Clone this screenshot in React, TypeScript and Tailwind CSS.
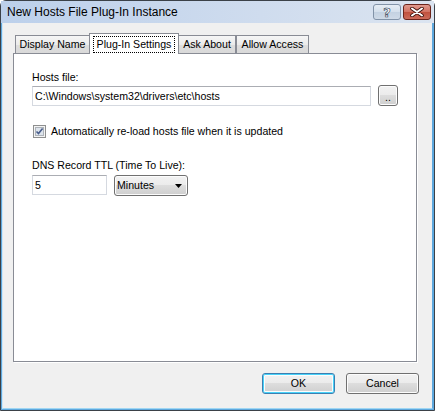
import React, { useState } from 'react';

const tabs = [
  { label: 'Display Name', w: 'w-[75px]' },
  { label: 'Plug-In Settings', w: 'w-[90px]' },
  { label: 'Ask About', w: 'w-[58px]' },
  { label: 'Allow Access', w: 'w-[73px]' },
];

const ui = "font-['Liberation_Sans',Arial,sans-serif] text-[10.6px] leading-[13px] text-black";

const CheckMark: React.FC = () => (
  <svg width="13" height="13" viewBox="0 0 13 13">
    <rect x="0.5" y="0.5" width="12" height="12" fill="#f4f4f4" stroke="#8e8f8f" />
    <rect x="2.5" y="2.5" width="8" height="8" fill="#dde4ec" stroke="#aeb3b9" />
    <path d="M3.5 6.5 L5.5 8.6 L9.6 3.6" fill="none" stroke="#4a5e8c" strokeWidth="1.6" />
  </svg>
);

const Dialog: React.FC = () => {
  const [active, setActive] = useState(1);
  const [hosts, setHosts] = useState('C:\\Windows\\system32\\drivers\\etc\\hosts');
  const [ttl, setTtl] = useState('5');
  const [reload, setReload] = useState(true);

  return (
    <div className="h-[411px] w-[435px] overflow-hidden bg-white">
      <div className="flex h-full w-full flex-col rounded-t-[6px] border border-[#3b4148] bg-[#c8d9ee]">
        {/* title bar */}
        <div className="flex h-[22px] shrink-0 justify-between bg-[linear-gradient(90deg,#bcd0eb,#cfdcee_60%,#dbe4f0)] pl-[6px] pr-[3px]">
          <span className="mt-[4px] font-['Liberation_Sans',Arial,sans-serif] text-[12px] leading-[15px] text-black">
            New Hosts File Plug-In Instance
          </span>
          <div className="mt-[3px] flex gap-[2px]">
            <div className="flex h-[16px] w-[28px] items-center justify-center rounded-[3px] border border-[#8293a8] bg-[linear-gradient(#e6edf5,#d4dfeb_50%,#c3d1e1_50%,#cfdae7)]">
              <span className="font-['DejaVu_Sans',sans-serif] text-[13px] font-bold leading-none text-white [-webkit-text-stroke:0.6px_#2b3c52]">
                ?
              </span>
            </div>
            <div className="flex h-[16px] w-[28px] items-center justify-center rounded-[3px] border border-[#6b241b] bg-[linear-gradient(#e09a8e,#d27161_50%,#c0503d_50%,#cc6b5a)]">
              <svg width="14" height="10" viewBox="0 0 14 10">
                <path d="M2 1.5 L12 8.5 M12 1.5 L2 8.5" stroke="#3b0e08" strokeWidth="3.6" strokeLinecap="round" />
                <path d="M2 1.5 L12 8.5 M12 1.5 L2 8.5" stroke="#ffffff" strokeWidth="2" strokeLinecap="round" />
              </svg>
            </div>
          </div>
        </div>

        {/* frame + client */}
        <div className="flex flex-1 flex-col border-x border-b border-[#5ea8de]">
          <div className={`flex flex-1 flex-col border-l border-r border-b border-l-[#cfe7f7] border-r-[#5ea8de] border-b-[#9fd6f3] bg-[#f0f0f0] pl-[10px] pt-[9px] ${ui}`}>
            {/* tabs */}
            <div className="flex h-[21px] items-end pl-[2px]">
              {tabs.map((t, i) =>
                i === active ? (
                  <div
                    key={t.label}
                    onClick={() => setActive(i)}
                    className={`relative z-10 -mx-[1px] -mb-px flex h-[21px] ${t.w} items-start justify-center border-x border-t border-[#898c95] bg-white pt-[2px]`}
                  >
                    <span className="border border-dotted border-black px-[3px] py-[1px]">{t.label}</span>
                  </div>
                ) : (
                  <div
                    key={t.label}
                    onClick={() => setActive(i)}
                    className={`flex h-[18px] ${t.w} items-center justify-center border-x border-t border-[#898c95] bg-[linear-gradient(#f6f6f6,#ebebeb_50%,#dedede_50%,#d9d9d9)]`}
                  >
                    {t.label}
                  </div>
                )
              )}
            </div>

            {/* panel */}
            <div className="flex h-[309px] w-[404px] flex-col border border-[#898c95] bg-white pl-[18px] pt-[17px] shadow-[1px_1px_0_#ffffff]">
              <span>Hosts file:</span>
              <div className="mt-[2px] flex items-start gap-[7px]">
                <input
                  value={hosts}
                  onChange={(e) => setHosts(e.target.value)}
                  className="h-[20px] w-[339px] border border-[#d5d9e0] border-t-[#abadb3] bg-white px-[2px] outline-none"
                />
                <button className="-mt-px flex h-[21px] w-[20px] items-end justify-center rounded-[3px] border border-[#707070] bg-[linear-gradient(#f2f2f2,#ebebeb_50%,#dddddd_50%,#cfcfcf)] pb-[4px] leading-[8px] shadow-[inset_0_0_0_1px_#fcfcfc]">
                  ..
                </button>
              </div>

              <label className="mt-[19px] flex items-center gap-[5px] pl-px" onClick={() => setReload(!reload)}>
                {reload ? (
                  <CheckMark />
                ) : (
                  <span className="h-[13px] w-[13px] border border-[#8e8f8f] bg-[#f4f4f4]" />
                )}
                <span>Automatically re-load hosts file when it is updated</span>
              </label>

              <span className="mt-[21px]">DNS Record TTL (Time To Live):</span>
              <div className="mt-[3px] flex items-start gap-[7px]">
                <input
                  value={ttl}
                  onChange={(e) => setTtl(e.target.value)}
                  className="h-[20px] w-[75px] border border-[#d5d9e0] border-t-[#abadb3] bg-white px-[2px] outline-none"
                />
                <div className="flex h-[21px] w-[74px] items-center justify-between rounded-[3px] border border-[#707070] bg-[linear-gradient(#f2f2f2,#ebebeb_50%,#dddddd_50%,#cfcfcf)] pl-[2px] pr-[5px] shadow-[inset_0_0_0_1px_#fcfcfc]">
                  <span>Minutes</span>
                  <svg width="7" height="4" viewBox="0 0 7 4">
                    <path d="M0 0 H7 L3.5 4 Z" fill="#000" />
                  </svg>
                </div>
              </div>
            </div>

            {/* buttons */}
            <div className="mt-[11px] flex justify-end gap-[11px] pr-[13px]">
              <button className="flex h-[21px] w-[73px] items-center justify-center rounded-[3px] border border-[#3c7fb1] bg-[linear-gradient(#f2f2f2,#ebebeb_50%,#dddddd_50%,#cfcfcf)] shadow-[inset_0_0_0_1px_#48d2f9,inset_0_0_0_2px_#fcfcfc]">
                OK
              </button>
              <button className="flex h-[21px] w-[73px] items-center justify-center rounded-[3px] border border-[#707070] bg-[linear-gradient(#f2f2f2,#ebebeb_50%,#dddddd_50%,#cfcfcf)] shadow-[inset_0_0_0_1px_#fcfcfc]">
                Cancel
              </button>
            </div>
          </div>
        </div>
      </div>
    </div>
  );
};

export default function App() {
  return <Dialog />;
}
